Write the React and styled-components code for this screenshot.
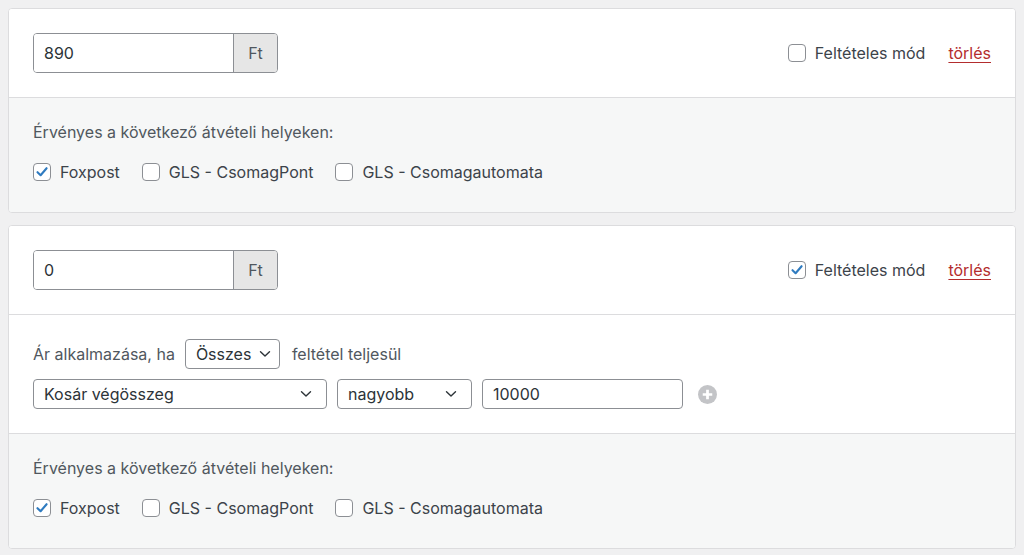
import React from "react";
import styled, { createGlobalStyle } from "styled-components";

const GlobalStyle = createGlobalStyle`
  html, body { margin: 0; padding: 0; }
  body {
    background: #f0f0f1;
    font-family: Inter, "Noto Sans", "Liberation Sans", sans-serif;
    font-size: 16px;
    color: #3c434a;
    -webkit-font-smoothing: antialiased;
  }
`;

const Page = styled.div`
  display: flex;
  flex-direction: column;
  gap: 12px;
  padding: 8px 8px 8px 8px;
  width: 1024px;
  box-sizing: border-box;
`;

const Card = styled.div`
  background: #fff;
  border: 1px solid #dcdcde;
  border-radius: 4px;
  overflow: hidden;
`;

const Section = styled.div`
  padding: ${(p) => p.$pad || "24px"};
  background: ${(p) => (p.$muted ? "#f6f7f7" : "#fff")};
  & + & { border-top: 1px solid #dcdcde; }
  display: flex;
  flex-direction: column;
  gap: ${(p) => p.$gap || "10px"};
`;

const HeaderRow = styled.div`
  display: flex;
  align-items: center;
  justify-content: space-between;
`;

const PriceGroup = styled.div`
  display: flex;
  width: 245px;
  height: 40px;
  border: 1px solid #8c8f94;
  border-radius: 4px;
  box-sizing: border-box;
  overflow: hidden;
`;

const PriceInput = styled.div`
  flex: 1;
  display: flex;
  align-items: center;
  padding: 0 10px;
  background: #fff;
  color: #2c3338;
  font-size: 16px;
`;

const Addon = styled.div`
  width: 43px;
  display: flex;
  align-items: center;
  justify-content: center;
  background: #e6e6e6;
  border-left: 1px solid #8c8f94;
  color: #50575e;
  font-size: 16px;
`;

const HeaderActions = styled.div`
  display: flex;
  align-items: center;
  gap: 23px;
`;

const CheckLabel = styled.label`
  display: inline-flex;
  align-items: center;
  gap: 9px;
  color: #3c434a;
  font-size: 16px;
  line-height: 20px;
`;

const Box = styled.span`
  width: 18px;
  height: 18px;
  box-sizing: border-box;
  border: 1px solid #8c8f94;
  border-radius: 4px;
  background: #fff;
  display: inline-flex;
  align-items: center;
  justify-content: center;
  flex-shrink: 0;
`;

const DeleteLink = styled.a`
  color: #b32d2e;
  text-decoration: underline;
  text-underline-offset: 3px;
  font-size: 16px;
`;

const Label = styled.div`
  color: #50575e;
  font-size: 16px;
  line-height: 20px;
`;

const CheckRow = styled.div`
  display: flex;
  align-items: center;
  gap: 22px;
  padding-bottom: 6px;
`;

const CondRow = styled.div`
  display: flex;
  align-items: center;
  gap: ${(p) => p.$gap || 10}px;
`;

const Muted = styled.span`
  color: #50575e;
  font-size: 16px;
`;

const Select = styled.div`
  height: 30px;
  width: ${(p) => p.$w}px;
  box-sizing: border-box;
  border: 1px solid #8c8f94;
  border-radius: 4px;
  background: #fff;
  display: flex;
  align-items: center;
  justify-content: space-between;
  padding: 0 ${(p) => p.$pr || 14}px 0 10px;
  color: #2c3338;
  font-size: 16px;
  margin-right: ${(p) => p.$mr || 0}px;
`;

const TextInput = styled.div`
  height: 30px;
  width: ${(p) => p.$w}px;
  box-sizing: border-box;
  border: 1px solid #8c8f94;
  border-radius: 4px;
  background: #fff;
  display: flex;
  align-items: center;
  padding: 0 10px;
  color: #2c3338;
  font-size: 16px;
`;

const PlusButton = styled.span`
  display: inline-flex;
  margin-left: 5px;
`;

const Check = ({ checked }) => (
  <Box>
    {checked && (
      <svg width="14" height="14" viewBox="0 0 14 14">
        <path d="M2.5 7.2 L5.6 10.2 L11.6 3.2" fill="none" stroke="#2f7bc0" strokeWidth="2.1" strokeLinecap="round" strokeLinejoin="round" />
      </svg>
    )}
  </Box>
);

const Chevron = () => (
  <svg width="12" height="8" viewBox="0 0 12 8">
    <path d="M1.5 1.8 L6 6 L10.5 1.8" fill="none" stroke="#2c3338" strokeWidth="1.4" strokeLinecap="round" strokeLinejoin="round" />
  </svg>
);

const Plus = () => (
  <svg width="19" height="19" viewBox="0 0 18 18">
    <circle cx="9" cy="9" r="9" fill="#c3c4c7" />
    <path d="M9 4.5 V13.5 M4.5 9 H13.5" stroke="#fff" strokeWidth="2.6" />
  </svg>
);

const Locations = () => (
  <Section $muted $gap="20px">
    <Label>Érvényes a következő átvételi helyeken:</Label>
    <CheckRow>
      <CheckLabel><Check checked />Foxpost</CheckLabel>
      <CheckLabel><Check />GLS - CsomagPont</CheckLabel>
      <CheckLabel><Check />GLS - Csomagautomata</CheckLabel>
    </CheckRow>
  </Section>
);

const Header = ({ price, conditional }) => (
  <Section>
    <HeaderRow>
      <PriceGroup>
        <PriceInput>{price}</PriceInput>
        <Addon>Ft</Addon>
      </PriceGroup>
      <HeaderActions>
        <CheckLabel><Check checked={conditional} />Feltételes mód</CheckLabel>
        <DeleteLink href="#">törlés</DeleteLink>
      </HeaderActions>
    </HeaderRow>
  </Section>
);

export default function App() {
  return (
    <>
      <GlobalStyle />
      <Page>
        <Card>
          <Header price="890" />
          <Locations />
        </Card>
        <Card>
          <Header price="0" conditional />
          <Section>
            <CondRow>
              <Muted>Ár alkalmazása, ha</Muted>
              <Select $w={95} $pr={8} $mr={2}>Összes <Chevron /></Select>
              <Muted>feltétel teljesül</Muted>
            </CondRow>
            <CondRow>
              <Select $w={294}>Kosár végösszeg <Chevron /></Select>
              <Select $w={135}>nagyobb <Chevron /></Select>
              <TextInput $w={201}>10000</TextInput>
              <PlusButton><Plus /></PlusButton>
            </CondRow>
          </Section>
          <Locations />
        </Card>
      </Page>
    </>
  );
}
